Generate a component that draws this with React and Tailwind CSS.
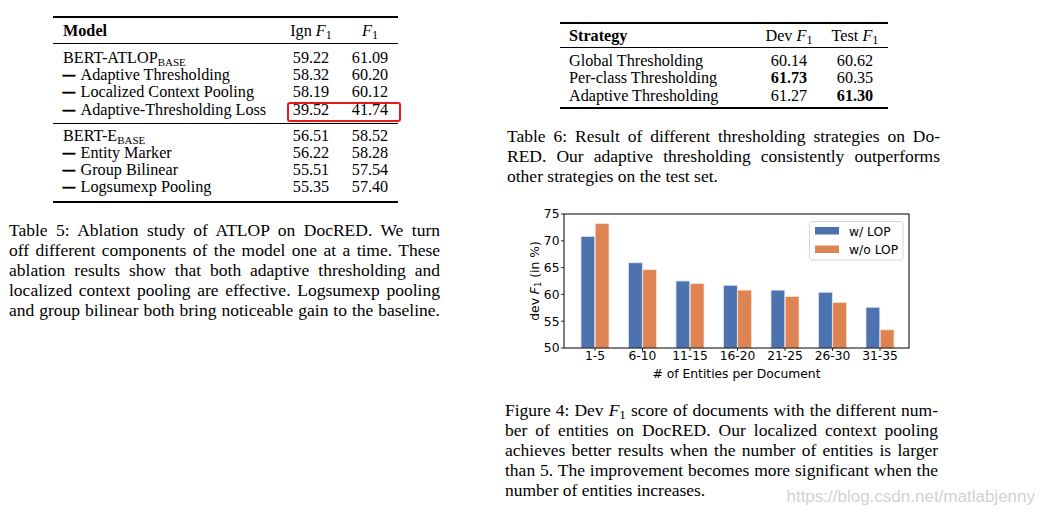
import React from "react";

function F1() {
  return (
    <>
      <i>F</i>
      <sub>1</sub>
    </>
  );
}

function Dash() {
  return (
    <span className="inline-block w-[17.5px]">
      <span className="inline-block font-bold scale-x-[1.45] origin-left [-webkit-text-stroke:0.7px_black]">–</span>
    </span>
  );
}

function Base() {
  return <sub className="text-[11px]">BASE</sub>;
}

function JLine({ children }) {
  return <div className="text-justify [text-align-last:justify]">{children}</div>;
}

function Row5({ label, a, b }) {
  return (
    <div className="grid grid-cols-[227px_62px_56px] h-[17.2px] items-center">
      <div className="pl-[10px] whitespace-nowrap">{label}</div>
      <div className="text-center">{a}</div>
      <div className="text-center">{b}</div>
    </div>
  );
}

function Row6({ label, a, b }) {
  return (
    <div className="grid grid-cols-[196px_66px_66px] h-[17.5px] items-center">
      <div className="pl-[9px] whitespace-nowrap">{label}</div>
      <div className="text-center">{a}</div>
      <div className="text-center">{b}</div>
    </div>
  );
}

function Table5() {
  return (
    <div className="relative w-[345px] ml-[44px] mt-[16px] text-[16.2px] leading-[17.2px] border-y-2 border-black">
      <div className="grid grid-cols-[227px_62px_56px] h-[26px] pt-[3px] items-center border-b border-black">
        <div className="pl-[10px] font-bold">Model</div>
        <div className="text-center">
          Ign <F1 />
        </div>
        <div className="text-center">
          <F1 />
        </div>
      </div>
      <div className="pt-[6px] pb-[4.5px] border-b border-black">
        <Row5 label={<>BERT-ATLOP<Base /></>} a="59.22" b="61.09" />
        <Row5 label={<><Dash />Adaptive Thresholding</>} a="58.32" b="60.20" />
        <Row5 label={<><Dash />Localized Context Pooling</>} a="58.19" b="60.12" />
        <Row5 label={<><Dash />Adaptive-Thresholding Loss</>} a="39.52" b="41.74" />
      </div>
      <div className="pt-[3.5px] pb-[4.5px]">
        <Row5 label={<>BERT-E<Base /></>} a="56.51" b="58.52" />
        <Row5 label={<><Dash />Entity Marker</>} a="56.22" b="58.28" />
        <Row5 label={<><Dash />Group Bilinear</>} a="55.51" b="57.54" />
        <Row5 label={<><Dash />Logsumexp Pooling</>} a="55.35" b="57.40" />
      </div>
      <div className="absolute left-[234px] top-[84px] w-[114px] h-[20px] border-2 border-[#e8191c] rounded-[3px]" />
    </div>
  );
}

function Table6() {
  return (
    <div className="w-[328px] ml-[55px] mt-[22px] text-[16.2px] leading-[17.5px] border-y-2 border-black">
      <div className="grid grid-cols-[196px_66px_66px] h-[24px] pt-[2px] items-center border-b border-black">
        <div className="pl-[9px] font-bold">Strategy</div>
        <div className="text-center">
          Dev <F1 />
        </div>
        <div className="text-center">
          Test <F1 />
        </div>
      </div>
      <div className="pt-[4.5px] pb-[2px]">
        <Row6 label="Global Thresholding" a="60.14" b="60.62" />
        <Row6 label="Per-class Thresholding" a={<b>61.73</b>} b="60.35" />
        <Row6 label="Adaptive Thresholding" a="61.27" b={<b>61.30</b>} />
      </div>
    </div>
  );
}

function Chart() {
  const blue = [70.8, 65.9, 62.5, 61.7, 60.8, 60.4, 57.6];
  const orange = [73.2, 64.6, 62.0, 60.8, 59.6, 58.5, 53.4];
  const labels = ["1-5", "6-10", "11-15", "16-20", "21-25", "26-30", "31-35"];
  const y = (v) => 148 - (v - 50) * 5.36;
  const ticks = [50, 55, 60, 65, 70, 75];
  return (
    <svg
      width="400"
      height="185"
      className="block ml-[15px] mt-[14px] font-['DejaVu_Sans',sans-serif]"
      fontSize="12.3"
    >
      {blue.map((v, i) => {
        const c = 75 + 47.5 * i;
        return (
          <g key={i}>
            <rect x={c - 14} y={y(v)} width="13.8" height={148 - y(v)} fill="#4c72b0" stroke="#dfe3ee" strokeWidth="0.8" />
            <rect x={c + 0.2} y={y(orange[i])} width="13.8" height={148 - y(orange[i])} fill="#dd8452" stroke="#f7e2d6" strokeWidth="0.8" />
            <line x1={c} y1="148" x2={c} y2="151" stroke="black" strokeWidth="0.8" />
            <text x={c} y="160" textAnchor="middle" fill="black">
              {labels[i]}
            </text>
          </g>
        );
      })}
      <rect x="44" y="14" width="345" height="134" fill="none" stroke="black" strokeWidth="1" />
      {ticks.map((t) => (
        <g key={t}>
          <line x1="41" y1={y(t)} x2="44" y2={y(t)} stroke="black" strokeWidth="0.8" />
          <text x="39.5" y={y(t) + 4.4} textAnchor="end" fill="black">
            {t}
          </text>
        </g>
      ))}
      <text x="216.5" y="178" textAnchor="middle" fill="black">
        # of Entities per Document
      </text>
      <text x="15" y="81" textAnchor="middle" dominantBaseline="central" transform="rotate(-90 15 81)" fill="black">
        dev <tspan fontStyle="italic">F</tspan>
        <tspan fontSize="8.5" dy="2.5">1</tspan>
        <tspan dy="-2.5"> (in %)</tspan>
      </text>
      <rect x="289.5" y="21.5" width="93.5" height="38.5" rx="2.5" fill="white" fillOpacity="0.85" stroke="#cccccc" strokeWidth="0.8" />
      <rect x="295" y="27" width="24" height="7.5" fill="#4c72b0" />
      <rect x="295" y="45.5" width="24" height="7.5" fill="#dd8452" />
      <text x="329" y="35.5" fill="black">
        w/ LOP
      </text>
      <text x="329" y="53.5" fill="black">
        w/o LOP
      </text>
    </svg>
  );
}

export default function App() {
  return (
    <div className="relative w-[1045px] h-[517px] bg-white overflow-hidden flex text-black font-['Liberation_Serif',serif]">
      <div className="w-[505px] pl-[9px] flex flex-col">
        <Table5 />
        <div className="w-[431px] mt-[17px] text-[17.5px] leading-[20px]">
          <JLine>Table 5: Ablation study of ATLOP on DocRED. We turn</JLine>
          <JLine>off different components of the model one at a time. These</JLine>
          <JLine>ablation results show that both adaptive thresholding and</JLine>
          <JLine>localized context pooling are effective. Logsumexp pooling</JLine>
          <JLine>and group bilinear both bring noticeable gain to the baseline.</JLine>
        </div>
      </div>
      <div className="w-[540px] flex flex-col">
        <Table6 />
        <div className="w-[433px] ml-[2px] mt-[16.5px] text-[17.5px] leading-[20px]">
          <JLine>Table 6: Result of different thresholding strategies on Do-</JLine>
          <JLine>RED. Our adaptive thresholding consistently outperforms</JLine>
          <div>other strategies on the test set.</div>
        </div>
        <Chart />
        <div className="w-[433px] mt-[15px] text-[17.5px] leading-[20px]">
          <JLine>
            Figure 4: Dev <F1 /> score of documents with the different num-
          </JLine>
          <JLine>ber of entities on DocRED. Our localized context pooling</JLine>
          <JLine>achieves better results when the number of entities is larger</JLine>
          <JLine>than 5. The improvement becomes more significant when the</JLine>
          <div>number of entities increases.</div>
        </div>
      </div>
      <div className="absolute right-[10px] top-[487px] text-[17px] leading-[20px] text-[#d2d2d2] font-['Liberation_Sans',sans-serif]">
        https://blog.csdn.net/matlabjenny
      </div>
    </div>
  );
}
